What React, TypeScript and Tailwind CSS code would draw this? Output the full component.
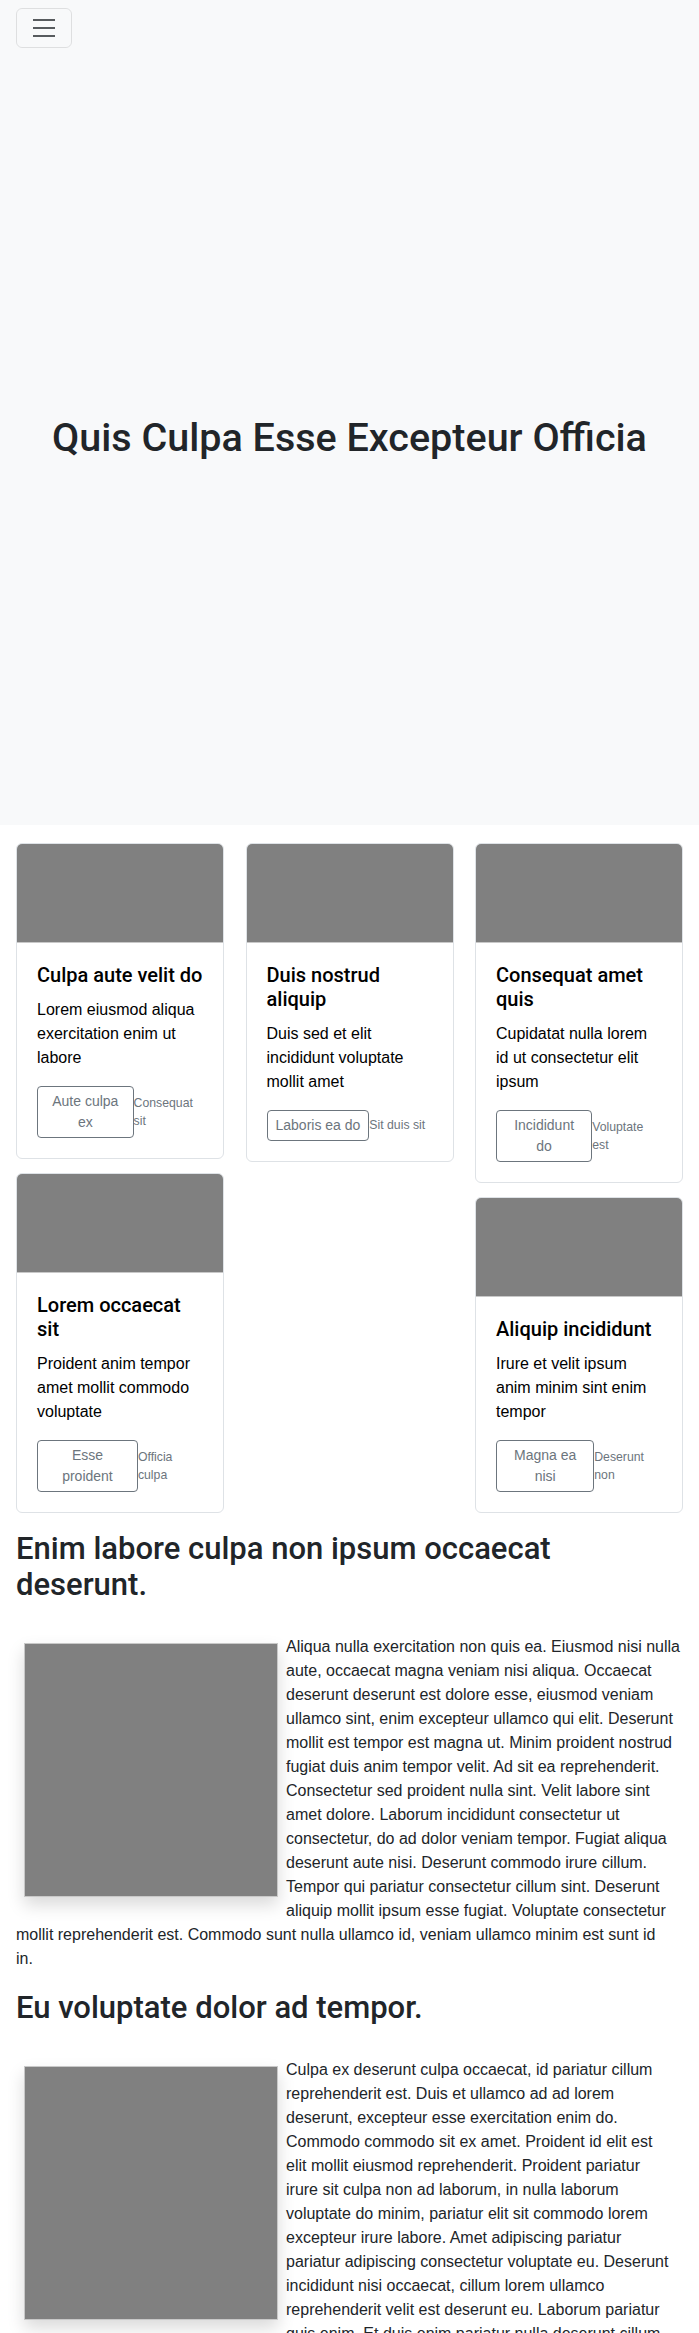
import React from "react";

const cards = [
  { t: "Culpa aute velit do", d: "Lorem eiusmod aliqua exercitation enim ut labore", b: "Aute culpa ex", s: "Consequat sit" },
  { t: "Duis nostrud aliquip", d: "Duis sed et elit incididunt voluptate mollit amet", b: "Laboris ea do", s: "Sit duis sit" },
  { t: "Consequat amet quis", d: "Cupidatat nulla lorem id ut consectetur elit ipsum", b: "Incididunt do", s: "Voluptate est" },
  { t: "Lorem occaecat sit", d: "Proident anim tempor amet mollit commodo voluptate", b: "Esse proident", s: "Officia culpa" },
  { t: "Aliquip incididunt", d: "Irure et velit ipsum anim minim sint enim tempor", b: "Magna ea nisi", s: "Deserunt non" },
];

const heading = { fontFamily: "Roboto, 'Liberation Sans', sans-serif" };

const para2Lines = [
  "Culpa ex deserunt culpa occaecat, id pariatur cillum",
  "reprehenderit est. Duis et ullamco ad ad lorem",
  "deserunt, excepteur esse exercitation enim do.",
  "Commodo commodo sit ex amet. Proident id elit est",
  "elit mollit eiusmod reprehenderit. Proident pariatur",
  "irure sit culpa non ad laborum, in nulla laborum",
  "voluptate do minim, pariatur elit sit commodo lorem",
  "excepteur irure labore. Amet adipiscing pariatur",
  "pariatur adipiscing consectetur voluptate eu. Deserunt",
  "incididunt nisi occaecat, cillum lorem ullamco",
  "reprehenderit velit est deserunt eu. Laborum pariatur",
  "quis enim. Et duis enim pariatur nulla deserunt cillum",
];

function Card({ c }: { c: (typeof cards)[number] }) {
  return (
    <div className="border border-[#dee2e6] rounded-[6px] overflow-hidden bg-white">
      <div className="h-[98px] bg-[#808080] border-b border-[#c8c8c8] box-content" />
      <div className="p-5">
        <h5 style={heading} className="text-[20px] leading-[1.2] font-medium text-black mb-[11px]">{c.t}</h5>
        <p className="text-[16px] leading-6 text-black mb-4">{c.d}</p>
        <div className="flex items-center">
          <button className="border border-[#6c757d] text-[#6c757d] rounded-[4px] px-2 py-1 text-[14px] leading-[1.5] bg-transparent">
            {c.b}
          </button>
          <small className="text-[12.25px] leading-[1.5] text-[#6c757d]">{c.s}</small>
        </div>
      </div>
    </div>
  );
}

export default function App() {
  return (
    <div className="bg-white text-[#212529]" style={{ fontFamily: "'Liberation Sans', Arial, sans-serif" }}>
      <div className="bg-[#f8f9fa]">
        <nav className="px-4 py-2 h-[56px]">
          <button className="w-[56px] h-[40px] border border-[rgba(0,0,0,0.1)] rounded-[6px] flex items-center justify-center">
            <svg width="30" height="30" viewBox="0 0 30 30">
              <path d="M4 7h22M4 15h22M4 23h22" stroke="rgba(33,37,41,0.75)" strokeWidth="2" strokeLinecap="butt" />
            </svg>
          </button>
        </nav>
        <div className="h-[769px] pb-[6px] flex items-center justify-center">
          <h1 style={heading} className="text-[39.5px] leading-[1.2] font-medium text-center">Quis Culpa Esse Excepteur Officia</h1>
        </div>
      </div>

      <div className="grid grid-cols-3 gap-x-[21.5px] px-4 pt-[18px] items-start">
        <div className="flex flex-col gap-[14px]">
          <Card c={cards[0]} />
          <Card c={cards[3]} />
        </div>
        <div className="flex flex-col gap-[14px]">
          <Card c={cards[1]} />
        </div>
        <div className="flex flex-col gap-[14px]">
          <Card c={cards[2]} />
          <Card c={cards[4]} />
        </div>
      </div>

      <div className="px-4 pt-[18px]">
        <section className="flow-root">
          <h1 style={heading} className="text-[31px] leading-[36px] font-medium">Enim labore culpa non ipsum occaecat deserunt.</h1>
          <div className="pt-8 flow-root">
            <div className="float-left w-[254px] h-[254px] m-2 bg-[#808080] border border-[#c8c8c8] shadow-[0_8px_16px_rgba(0,0,0,0.15)]" />
            <p className="text-[16px] leading-6">
              Aliqua nulla exercitation non quis ea. Eiusmod nisi nulla aute, occaecat magna veniam nisi aliqua. Occaecat deserunt deserunt est dolore esse, eiusmod veniam ullamco sint, enim excepteur ullamco qui elit. Deserunt mollit est tempor est magna ut. Minim proident nostrud fugiat duis anim tempor velit. Ad sit ea reprehenderit. Consectetur sed proident nulla sint. Velit labore sint amet dolore. Laborum incididunt consectetur ut consectetur, do ad dolor veniam tempor. Fugiat aliqua deserunt aute nisi. Deserunt commodo irure cillum. Tempor qui pariatur consectetur cillum sint. Deserunt aliquip mollit ipsum esse fugiat. Voluptate consectetur mollit reprehenderit est. Commodo sunt nulla ullamco id, veniam ullamco minim est sunt id
              <br />
              in.
            </p>
          </div>
        </section>

        <section className="flow-root pt-[19px]">
          <h1 style={heading} className="text-[31px] leading-[36px] font-medium">Eu voluptate dolor ad tempor.</h1>
          <div className="pt-8 flow-root">
            <div className="float-left w-[254px] h-[254px] m-2 bg-[#808080] border border-[#c8c8c8] shadow-[0_8px_16px_rgba(0,0,0,0.15)]" />
            <p className="text-[16px] leading-6">
              {para2Lines.map((l, i) => (
                <React.Fragment key={i}>
                  {l}
                  <br />
                </React.Fragment>
              ))}
              Ipsum irure aliqua occaecat, sint veniam proident nulla. Magna ullamco commodo aute nostrud.
            </p>
          </div>
        </section>
      </div>
    </div>
  );
}
